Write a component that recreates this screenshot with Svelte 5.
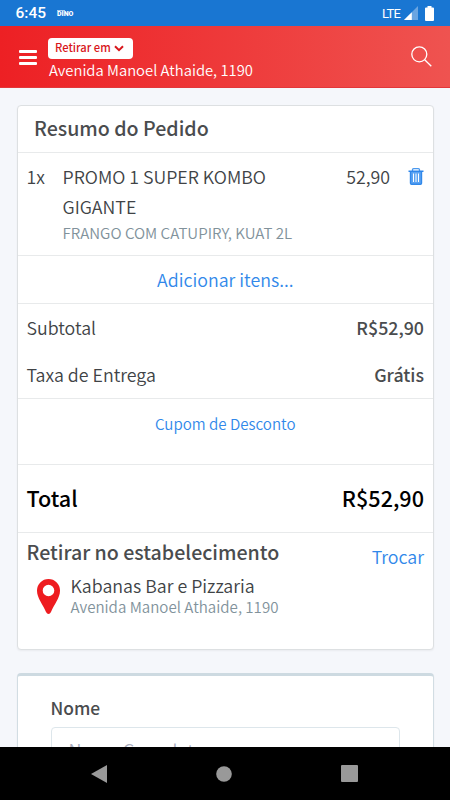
<script>
    const store = {
        name: 'Kabanas Bar e Pizzaria',
        address: 'Avenida Manoel Athaide, 1190'
    };

    let items = [
        {
            quantity: 1,
            title: 'PROMO 1 SUPER KOMBO GIGANTE',
            details: 'FRANGO COM CATUPIRY, KUAT 2L',
            price: '52,90'
        }
    ];

    let customerName = '';
</script>

<div class="screen">
    <div class="status-bar">
        <span class="time">6:45</span>
        <span class="badge-dino"><i></i>DINO</span>
        <span class="network">LTE</span>
        <svg class="signal" width="14" height="14" viewBox="0 0 14 14">
            <path d="M0 14 14 0V14Z" fill="#6ba5e1" />
            <path d="M0 14 7.8 6.2V14Z" fill="#fff" />
        </svg>
        <svg class="battery" width="9" height="15" viewBox="0 0 9 15">
            <path d="M2.5 0h4v1.5H8a1 1 0 0 1 1 1V14a1 1 0 0 1-1 1H1a1 1 0 0 1-1-1V2.5a1 1 0 0 1 1-1h1.500Z" fill="#fff" />
        </svg>
    </div>

    <header>
        <button class="menu" aria-label="Menu">
            <span></span>
            <span></span>
            <span></span>
        </button>
        <div class="place">
            <button class="pickup">
                <span class="pickup-label">Retirar em</span>
                <svg width="10" height="7" viewBox="0 0 10 7">
                    <path d="M1 1.300 5 5.200 9 1.300" fill="none" stroke="#d8161b" stroke-width="2" />
                </svg>
            </button>
            <div class="address">{store.address}</div>
        </div>
        <svg class="search" width="21" height="21" viewBox="0 0 21 21">
            <g fill="none" stroke="#fff" stroke-width="1.300">
                <circle cx="8.300" cy="8.300" r="7.500" />
                <path d="M13.700 13.700 20.300 20.200" />
            </g>
        </svg>
    </header>

    <main>
        <section class="card">
            <h2>Resumo do Pedido</h2>

            {#each items as item}
                <div class="item">
                    <span class="quantity">{item.quantity}x</span>
                    <div class="description">
                        <div class="item-title">{item.title}</div>
                        <div class="details">{item.details}</div>
                    </div>
                    <span class="price">{item.price}</span>
                    <button class="trash" aria-label="Remover">
                        <svg width="16" height="17" viewBox="0 0 16 17">
                            <path d="M4.500 3V1.800Q4.500.7 5.600.7h4.800Q11.500.7 11.500 1.800V3" fill="none" stroke="#4a98ee" stroke-width="1.300" />
                            <path d="M.5 2.500h15v1.500H.5Z" fill="#2e86ea" />
                            <path d="M2.500 4v11.200q0 1 1 1h9q1 0 1-1V4" fill="#5ba3f2" stroke="#3188ea" stroke-width="1.400" />
                            <path d="M5.500 5.500v8.500M8 5.500v8.500M10.500 5.500v8.500" stroke="#fff" stroke-width="1" />
                        </svg>
                    </button>
                </div>
            {/each}

            <a class="add-items" href="#add">Adicionar itens...</a>

            <div class="amounts">
                <div class="row">
                    <span>Subtotal</span>
                    <b>R$52,90</b>
                </div>
                <div class="row">
                    <span>Taxa de Entrega</span>
                    <b>Grátis</b>
                </div>
            </div>

            <a class="coupon" href="#coupon">Cupom de Desconto</a>

            <div class="total">
                <b>Total</b>
                <b>R$52,90</b>
            </div>

            <div class="pickup-info">
                <div class="pickup-head">
                    <h3>Retirar no estabelecimento</h3>
                    <a class="change" href="#change">Trocar</a>
                </div>
                <div class="store">
                    <svg width="23" height="35" viewBox="0 0 23 35">
                        <path fill-rule="evenodd" d="M11.500 0A11.500 11.500 0 0 0 0 11.700C0 19 6 25.500 9 33Q10 35 11.500 35T14 33C17 25.500 23 19 23 11.700A11.500 11.500 0 0 0 11.500 0ZM11.500 5.700a5.800 5.800 0 1 1 0 11.600 5.800 5.800 0 0 1 0-11.600Z" fill="#ee1c20" />
                    </svg>
                    <div>
                        <div class="store-name">{store.name}</div>
                        <div class="store-address">{store.address}</div>
                    </div>
                </div>
            </div>
        </section>

        <section class="card form">
            <label for="name">Nome</label>
            <input id="name" type="text" placeholder="Nome Completo" bind:value={customerName}>
        </section>
    </main>

    <nav>
        <svg width="16" height="18" viewBox="0 0 16 18"><path d="M0 9 16 0V18Z" fill="#999" /></svg>
        <svg width="16" height="16" viewBox="0 0 16 16"><circle cx="8" cy="8" r="7.800" fill="#999" /></svg>
        <svg width="17" height="17" viewBox="0 0 17 17"><rect width="17" height="17" rx="1" fill="#999" /></svg>
    </nav>
</div>

<style>
    :global(body) {
        background: #f5f7fb;
    }

    .screen {
        display: flex;
        flex-direction: column;
        width: 450px;
        height: 800px;
        overflow: hidden;
        background: #f5f7fb;
        color: #404346;
        font-family: "Noto Sans CJK SC", "Source Sans Pro", sans-serif;
        font-size: 17.8px;
        font-weight: 350;
    }

    button {
        padding: 0;
        border: 0;
        background: none;
        font-family: inherit;
    }

    a {
        color: #3188ea;
        text-decoration: none;
    }

    h2, h3 {
        margin: 0;
    }

    b, h2, h3, label {
        font-weight: 500;
    }

    b, h2, h3 {
        color: #4a4c4e;
    }

    .status-bar {
        display: flex;
        align-items: center;
        flex: none;
        box-sizing: border-box;
        height: 26px;
        padding: 0 16px 0 15.5px;
        background: #1976d2;
        color: #fff;
        font-family: Roboto, sans-serif;
        font-weight: 400;
    }

    .time {
        width: 41.5px;
        font-size: 15.5px;
        font-weight: 500;
        line-height: 28px;
    }

    .badge-dino {
        display: flex;
        flex-direction: column;
        width: 17px;
        font-size: 7px;
        font-weight: 900;
        line-height: 6px;
    }

    .badge-dino i {
        width: 8px;
        height: 1px;
        margin-top: 1px;
        background: #a9cbed;
    }

    .network {
        margin-left: auto;
        font-size: 13px;
        letter-spacing: -0.8px;
    }

    .signal {
        margin-left: 4px;
    }

    .battery {
        margin-left: 7px;
    }

    header {
        display: flex;
        flex: none;
        box-sizing: border-box;
        height: 62px;
        padding: 12px 18.5px 0 19px;
        background: linear-gradient(90deg, #ed2024, #ef5350);
        border-bottom: 1px solid #e2373a;
        color: #fff;
    }

    .menu {
        display: flex;
        flex-direction: column;
        gap: 3px;
        width: 18px;
        height: 15px;
        margin-top: 12px;
    }

    .menu span {
        height: 3px;
        width: 18px;
        border-radius: 1px;
        background: #fff;
    }

    .place {
        margin-left: 11px;
    }

    .pickup {
        display: flex;
        align-items: center;
        gap: 3px;
        box-sizing: border-box;
        width: 85px;
        height: 21px;
        padding-left: 7px;
        border-radius: 4px;
        background: #fff;
        color: #d8161b;
        font-size: 11.2px;
        font-weight: 500;
        line-height: 20px;
    }

    .pickup-label {
        margin-top: -3px;
        white-space: nowrap;
    }

    .address {
        margin: 1px 0 0 1px;
        font-size: 14.8px;
        line-height: 20px;
        white-space: nowrap;
    }

    .search {
        margin: 8px 0 0 auto;
    }

    main {
        flex: 1;
        min-height: 0;
        overflow: hidden;
        padding: 17px 16px 0 16.5px;
    }

    .card {
        box-sizing: border-box;
        border: 1px solid #dde0e2;
        border-radius: 4px;
        background: #fff;
        box-shadow: 0 1px 2px rgba(0, 0, 0, 0.05);
    }

    h2 {
        height: 46px;
        padding-left: 16.5px;
        border-bottom: 1px solid #e8eaeb;
        font-size: 19.6px;
        line-height: 44px;
    }

    .item {
        display: flex;
        box-sizing: border-box;
        height: 103px;
        padding: 8px 9px 0;
        border-bottom: 1px solid #e8eaeb;
        line-height: 30px;
    }

    .quantity {
        width: 36px;
    }

    .description {
        width: 240px;
        margin-right: auto;
    }

    .item-title {
        width: 220px;
    }

    .details,
    .store-address {
        color: #81929b;
        font-size: 15.1px;
        line-height: 22px;
        white-space: nowrap;
    }

    .trash {
        width: 16px;
        height: 17px;
        margin: 7px 0 0 18px;
    }

    .trash svg {
        display: block;
    }

    .add-items {
        display: block;
        height: 47px;
        border-bottom: 1px solid #e8eaeb;
        line-height: 47px;
        text-align: center;
    }

    .amounts {
        height: 94px;
        border-bottom: 1px solid #e8eaeb;
    }

    .row {
        display: flex;
        justify-content: space-between;
        height: 47px;
        padding: 0 9px;
        line-height: 47px;
    }

    .coupon {
        display: block;
        height: 65px;
        border-bottom: 1px solid #e8eaeb;
        font-size: 15.1px;
        line-height: 49px;
        text-align: center;
    }

    .total {
        display: flex;
        justify-content: space-between;
        height: 67px;
        padding: 0 9px;
        border-bottom: 1px solid #e8eaeb;
        font-size: 21.6px;
        line-height: 66px;
    }

    .total b {
        color: #000;
    }

    .pickup-info {
        height: 116px;
        padding: 0 9px;
    }

    .pickup-head {
        display: flex;
        justify-content: space-between;
        height: 45px;
    }

    h3 {
        font-size: 19.6px;
        line-height: 38px;
    }

    .change {
        line-height: 47px;
    }

    .store {
        display: flex;
        gap: 10.5px;
        padding-left: 10.5px;
    }

    .store svg {
        margin-top: 0.5px;
    }

    .store-name {
        height: 19px;
        line-height: 15px;
    }

    .store-address {
        line-height: 18px;
    }

    .form {
        height: 140px;
        margin-top: 23px;
        padding: 17px 33px 0;
        border-color: #d2dde3;
        border-top: 3px solid #cddae1;
    }

    label {
        display: block;
        height: 34px;
        color: #4a4c4e;
        font-size: 17.4px;
        line-height: 29px;
    }

    input {
        display: block;
        box-sizing: border-box;
        width: 349px;
        height: 46px;
        padding: 0 17px;
        border: 1px solid #dde6eb;
        border-radius: 4px;
        font-family: inherit;
        font-size: 18px;
        font-weight: 350;
    }

    input::placeholder {
        color: #a9adbd;
    }

    nav {
        display: flex;
        align-items: center;
        flex: none;
        gap: 109px;
        box-sizing: border-box;
        height: 53px;
        padding: 0 0 0 91px;
        background: #000;
    }
</style>
